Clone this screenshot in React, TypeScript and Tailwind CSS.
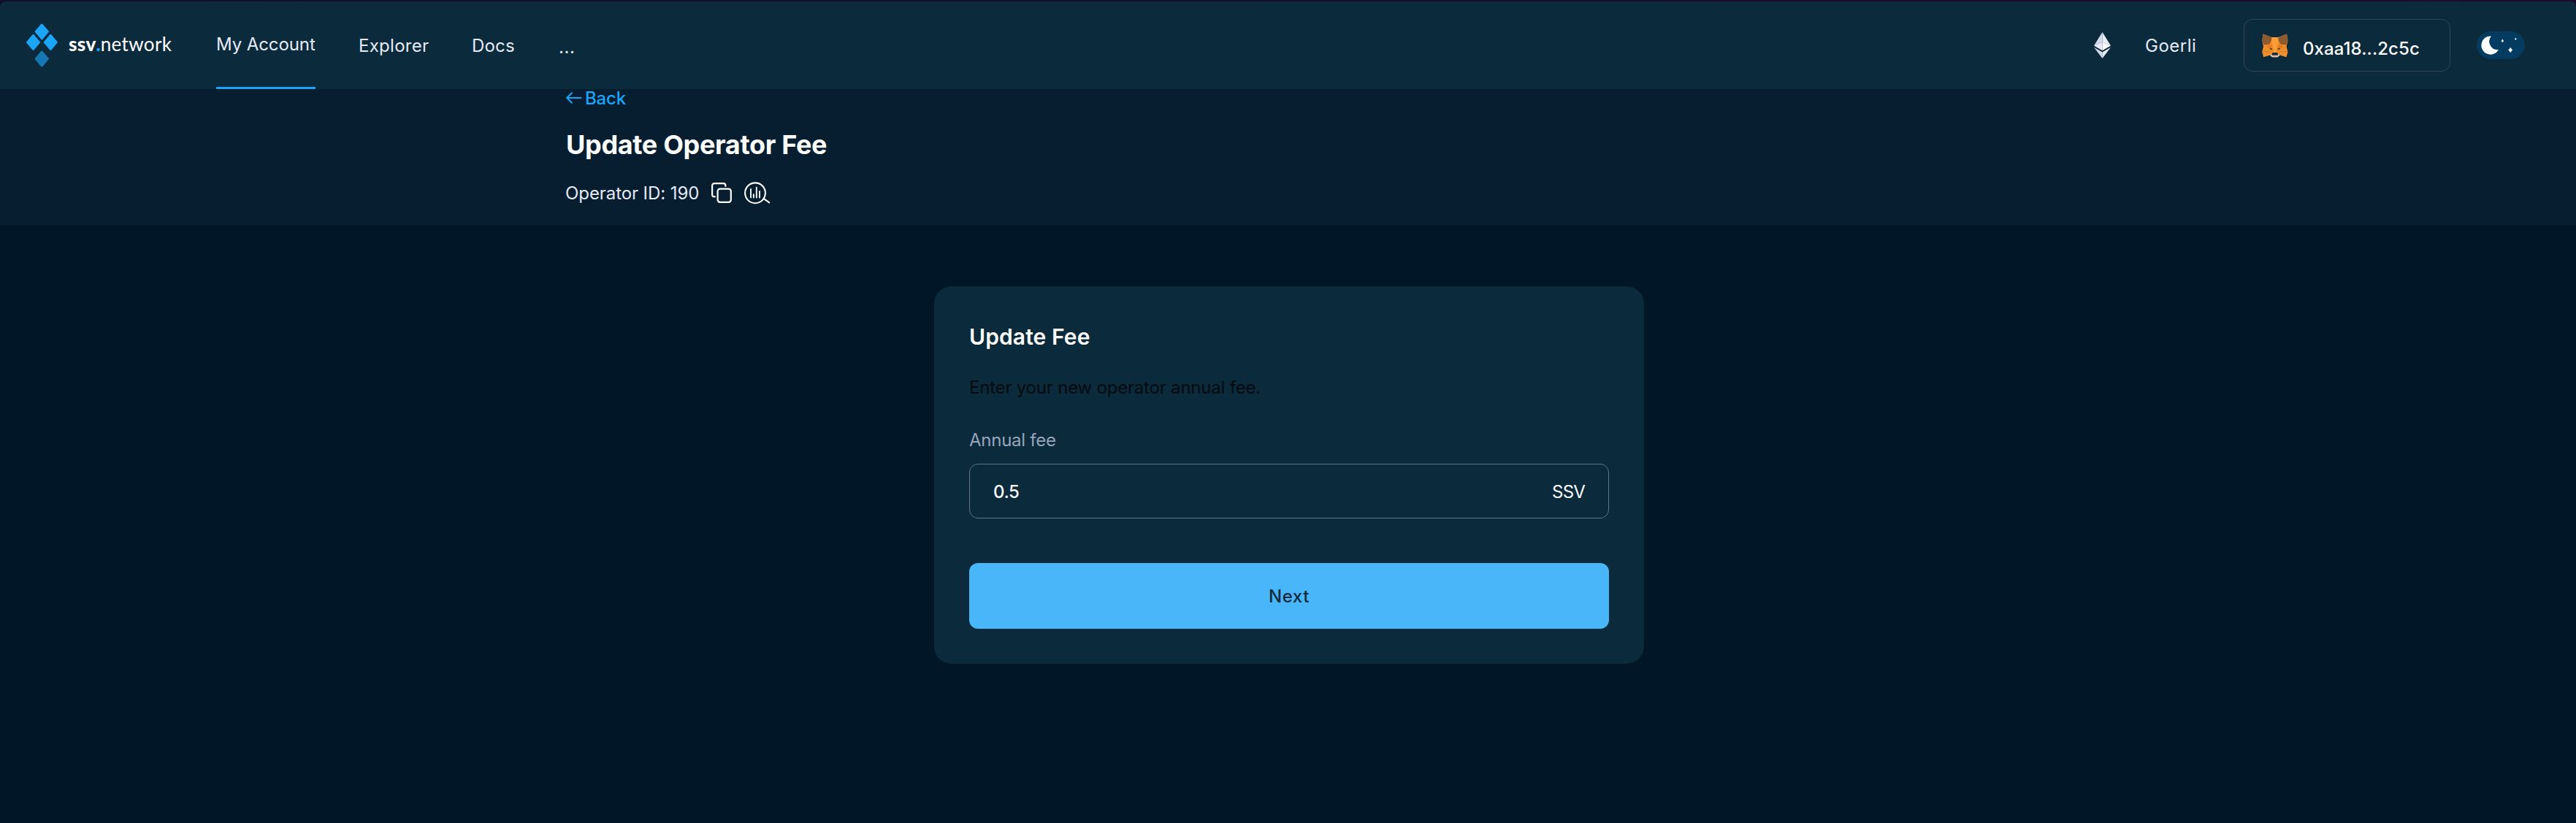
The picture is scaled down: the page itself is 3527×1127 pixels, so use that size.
import type { ReactNode } from 'react';

function LogoMark() {
  return (
    <svg width="43" height="60" viewBox="0 0 43 60" className="shrink-0" strokeLinejoin="round" strokeWidth="3">
      <g fill="#1ba5f8" stroke="#1ba5f8">
        <path d="M21.3 2 L29.3 11.3 L21.3 20.8 L13.3 11.3Z" />
        <path d="M9.5 16.5 L17.5 25.9 L9.5 35.4 L1.6 25.9Z" />
        <path d="M33.3 16.5 L41.3 25.9 L33.3 35.4 L25.3 25.9Z" />
      </g>
      <path d="M21.3 39.2 L29.3 48.5 L21.3 58 L13.3 48.5Z" fill="#1577b3" stroke="#1577b3" />
    </svg>
  );
}

function EthIcon() {
  return (
    <svg width="23" height="36" viewBox="0 0 23 36" className="shrink-0">
      <path d="M11.5 0 L0 18.5 L11.5 13.5Z" fill="#d5dbec" />
      <path d="M11.5 0 L23 18.5 L11.5 13.5Z" fill="#e9edf9" />
      <path d="M0 18.5 L11.5 13.5 V25.3Z" fill="#e6eaf7" />
      <path d="M23 18.5 L11.5 13.5 V25.3Z" fill="#fdfcff" />
      <path d="M0 20.8 L11.5 27.4 V36Z" fill="#d5dbec" />
      <path d="M23 20.8 L11.5 27.4 V36Z" fill="#e9edf9" />
    </svg>
  );
}

function FoxIcon() {
  return (
    <svg width="36" height="33" viewBox="0 0 36 33" className="shrink-0">
      <path d="M1.5 .5 L13 5 H22.5 L34 .5 L35.5 9 L33.6 18 L35.5 25 L33.5 32.2 L24.5 29.6 L21.5 32.3 H14 L11 29.6 L2.2 32.2 L.2 25 L2 18 L.3 9Z" fill="#ee8d2b" />
      <path d="M1.5 .5 L14.5 6 L10.3 14.5 L2.4 15.5 L.4 9Z M34 .5 L21 6 L25.3 14.5 L33.2 15.5 L35.3 9Z" fill="#8e5a30" />
      <path d="M13 5 H22.5 L21.5 17 L20 26 H15.5 L14.2 17Z" fill="#fb9d34" />
      <path d="M10.3 14.5 L14.2 16.5 L15.5 25 L12 21.8 L5.5 17.5Z M25.3 14.5 L21.4 16.5 L20 25 L23.6 21.8 L30 17.5Z" fill="#e6801f" />
      <path d="M.5 24.5 H11.5 M24 24.5 H35" stroke="#c9741f" strokeWidth=".7" />
      <path d="M11 19.2 L14.3 20.8 L13.7 22.3 L10.8 21.2Z M24.7 19.2 L21.4 20.8 L22 22.3 L24.9 21.2Z" fill="#5b4328" />
      <path d="M11 29.4 L13.5 28 H22 L24.7 29.4 L21.6 32.3 H14Z" fill="#d3c7bb" />
      <path d="M14.6 26 H21 L22.3 29 L21.4 29.7 H14.2 L13.3 29Z" fill="#232b31" />
    </svg>
  );
}

function ThemeToggle() {
  return (
    <div className="ml-9 h-[38px] w-[66px] shrink-0 overflow-hidden rounded-full bg-[#043b60]">
      <svg width="66" height="38" viewBox="0 0 66 38" fill="#fff">
        <path d="M20 6.5 A12.6 12.6 0 1 0 30 25 A11.3 11.3 0 0 1 20 6.5Z" />
        <path d="M46.3 22.4 Q47.2 24.7 48.8 25.4 Q47.2 26.2 46.3 28.5 Q45.3 26.2 43.7 25.4 Q45.3 24.7 46.3 22.4Z" stroke="#fff" strokeWidth="1" />
        <path d="M35.3 10.6 L37 13 L35.3 15.2 L33.7 13Z" />
        <path d="M53.3 8.8 L54.7 10.5 L53.3 12 L52 10.5Z" />
      </svg>
    </div>
  );
}

function BackArrow() {
  return (
    <svg width="22" height="16" viewBox="0 0 22 16" fill="none" stroke="#1ba5f8" strokeWidth="2" strokeLinecap="round" strokeLinejoin="round" className="shrink-0">
      <path d="M20.5 8 H1.2 M8 1.2 L1.2 8 L8 14.8" />
    </svg>
  );
}

function CopyIcon() {
  return (
    <svg width="28" height="28" viewBox="0 0 28 28" fill="none" stroke="#fdfefe" strokeWidth="2.2" strokeLinecap="round" className="ml-4 shrink-0">
      <rect x="8.6" y="8.6" width="18.2" height="18.2" rx="3.2" />
      <path d="M4.8 19.4 H4.1 A3 3 0 0 1 1.1 16.4 V4.1 A3 3 0 0 1 4.1 1.1 H16.4 A3 3 0 0 1 19.4 4.1 V4.9" />
    </svg>
  );
}

function ScanIcon() {
  return (
    <svg width="36" height="31" viewBox="0 0 36 31" fill="none" stroke="#fdfefe" strokeWidth="2.1" strokeLinecap="round" className="ml-[17px] shrink-0">
      <circle cx="15" cy="15.3" r="13.9" />
      <path d="M26.8 23.2 L34.2 28.4" strokeWidth="2.2" />
      <path d="M9 10 V21.5 M12.8 17.2 V21.5 M16.8 7.8 V21.5 M21 13 V21.5" strokeWidth="1.9" />
    </svg>
  );
}

function NavItem({ className, children }: { className: string; children: ReactNode }) {
  return <a className={`shrink-0 whitespace-nowrap text-[#e6eaf7] ${className}`}>{children}</a>;
}

export default function App() {
  return (
    <div className="min-h-[1127px] w-full bg-[#011627] font-['Inter',sans-serif] text-2xl leading-8">
      <div className="bg-linear-to-r from-[#100f2c] to-[#1d0b2b] pt-0.5">
        <header className="flex h-[120px] items-center rounded-t-lg bg-[#0b2a3c] pr-[70px] pl-9">
          <div className="flex w-[260px] shrink-0 items-center">
            <LogoMark />
            <div className="mb-[5px] ml-[15px] flex font-['Lato',sans-serif] text-[26px] whitespace-nowrap text-white">
              <span className="font-black tracking-[0.3px]">ssv</span>
              <span className="font-black text-[#1ba5f8]">.</span>
              <span className="tracking-[0.35px]">network</span>
            </div>
          </div>
          <a className="flex h-full w-[136px] shrink-0 items-center border-b-[3px] border-[#1ba5f8] tracking-[-0.1px] whitespace-nowrap text-[#e6eaf7]">
            My Account
          </a>
          <NavItem className="ml-[59px] w-24 pt-0.5 tracking-[0.28px]">Explorer</NavItem>
          <NavItem className="ml-[59px] w-[60px] pt-0.5 tracking-[0.19px]">Docs</NavItem>
          <NavItem className="ml-[59px] pt-1.5 tracking-[0.59px]">...</NavItem>

          <div className="ml-auto flex shrink-0 items-center">
            <EthIcon />
            <span className="ml-[47px] w-[70px] pt-0.5 tracking-[0.5px] whitespace-nowrap text-[#e6eaf7]">Goerli</span>
            <div className="ml-[65px] flex h-[72px] w-[283px] items-center rounded-xl border border-[#34455a] pl-6">
              <FoxIcon />
              <span className="ml-5 pt-2.5 font-medium tracking-[0.08px] whitespace-nowrap text-[#fdfefe]">0xaa18...2c5c</span>
            </div>
            <ThemeToggle />
          </div>
        </header>
      </div>

      <section className="h-[186px] bg-[#071e31] pl-[775px]">
        <a className="flex h-6 items-center font-medium tracking-[-0.2px] text-[#1ba5f8]">
          <BackArrow />
          <span className="ml-1 pt-0.5">Back</span>
        </a>
        <h1 className="mt-7 text-4xl leading-[48px] font-bold tracking-[-0.33px] text-[#fdfefe]">Update Operator Fee</h1>
        <div className="mt-[26px] flex h-8 items-center text-[#e6eaf7]">
          <span className="-ml-px w-[184px] pt-0.5 tracking-[-0.08px] whitespace-nowrap">Operator ID: 190</span>
          <CopyIcon />
          <ScanIcon />
        </div>
      </section>

      <main className="flex justify-center pt-[84px] pl-[3px]">
        <div className="h-[517px] w-[972px] rounded-3xl bg-[#0b2a3c] px-12 pt-[49px]">
          <h2 className="text-[30px] leading-10 font-semibold tracking-[0.1px] text-[#fdfefe]">Update Fee</h2>
          <p className="mt-[34px] tracking-[-0.2px] text-[#020a10]">Enter your new operator annual fee.</p>
          <label className="mt-10 block tracking-[-0.26px] text-[#97a5ba]">Annual fee</label>
          <div className="mt-4 flex h-[75px] items-center justify-between rounded-xl border border-[#63738a] pr-8 pl-8 text-[#fdfefe]">
            <span className="pt-[3px] font-medium tracking-[-0.4px]">0.5</span>
            <span className="pt-0.5 tracking-[-0.8px]">SSV</span>
          </div>
          <button className="mt-[61px] h-[90px] w-full rounded-xl bg-[#49b6fa] pt-0.5 font-medium tracking-[0.6px] text-[#0b2a3c]">Next</button>
        </div>
      </main>
    </div>
  );
}
